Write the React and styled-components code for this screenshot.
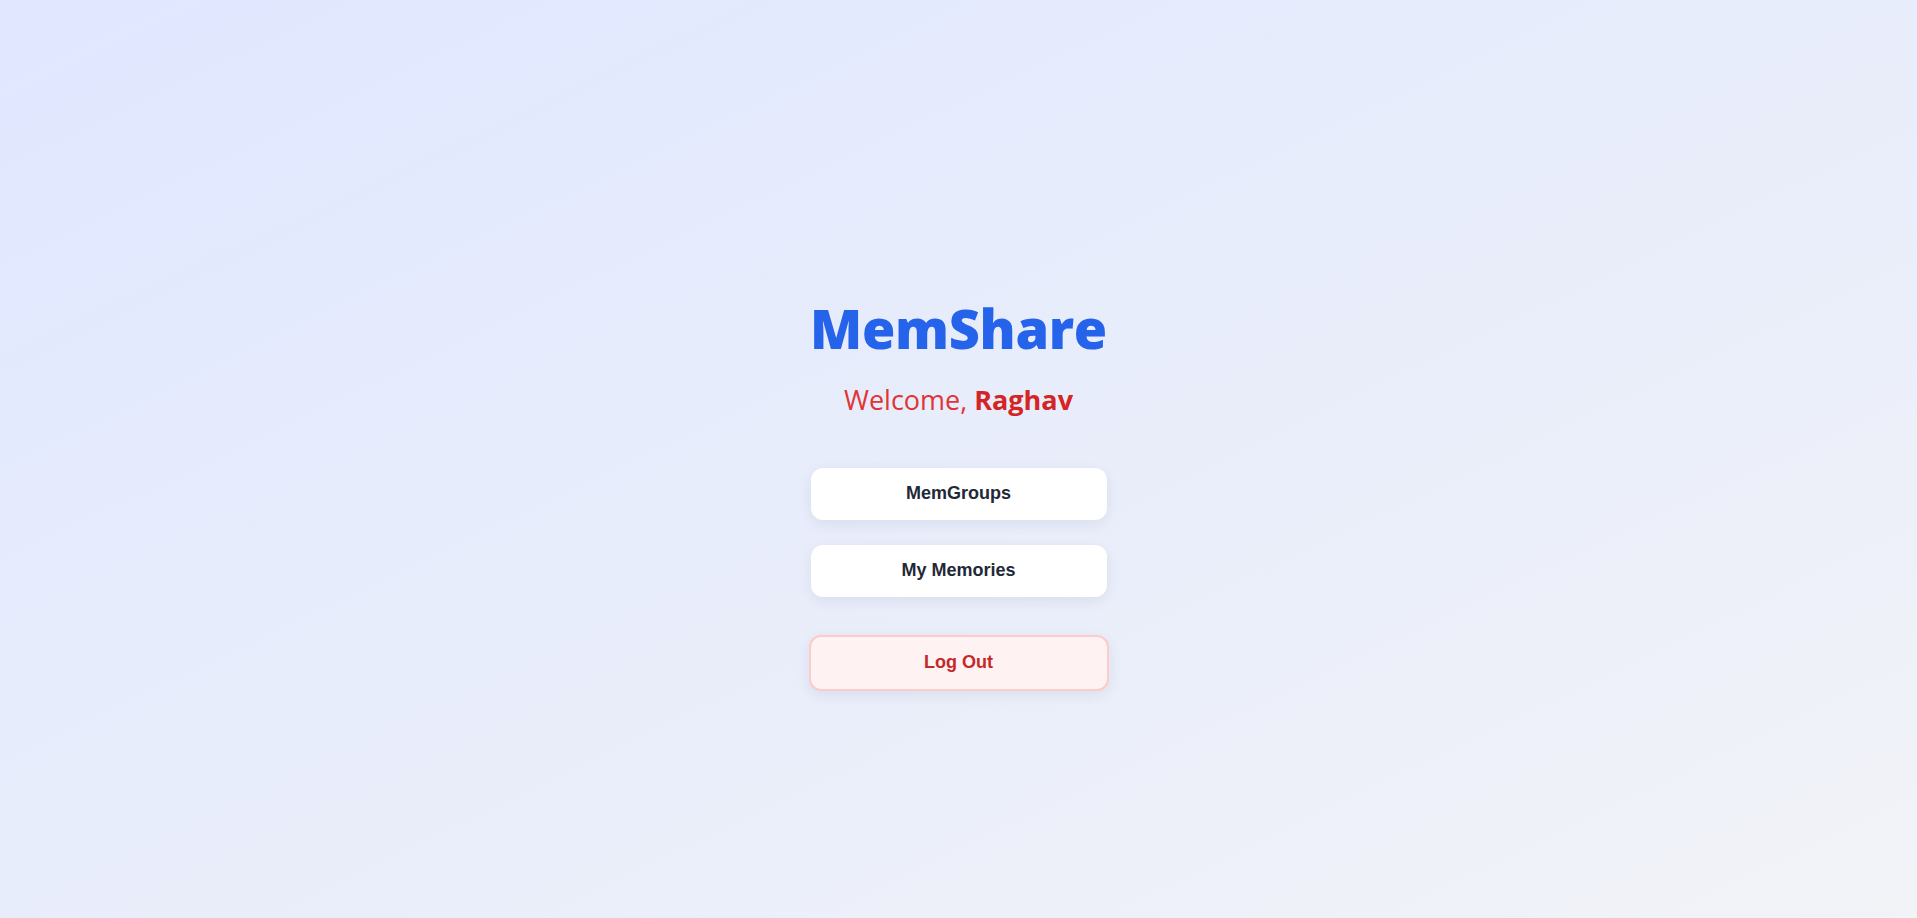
import styled, { createGlobalStyle } from 'styled-components';

const GlobalStyle = createGlobalStyle`
  html, body {
    margin: 0;
    padding: 0;
  }
  * {
    box-sizing: border-box;
  }
`;

const Page = styled.main`
  width: 100vw;
  min-height: 100vh;
  padding-top: 74px;
  display: flex;
  flex-direction: column;
  align-items: center;
  justify-content: center;
  background: linear-gradient(to bottom right, #e0e7ff, #f1f3f7);
`;

const Title = styled.h1`
  margin: 0;
  font-family: "Open Sans", "Noto Sans", sans-serif;
  font-size: 54px;
  font-weight: 800;
  line-height: 1;
  letter-spacing: -0.3px;
  color: #2563eb;
`;

const Welcome = styled.p`
  margin: 29px 0 0;
  font-family: "Open Sans", "Noto Sans", sans-serif;
  font-size: 27px;
  line-height: 1.2;
  color: #e03535;

  strong {
    font-weight: 700;
    color: #d42424;
  }
`;

const Menu = styled.nav`
  margin-top: 51px;
  width: 300px;
  display: flex;
  flex-direction: column;
  align-items: center;
  gap: 25px;
`;

const Button = styled.button`
  width: ${(p) => (p.$danger ? '300px' : '296px')};
  height: ${(p) => (p.$danger ? '56px' : '52px')};
  margin-top: ${(p) => (p.$danger ? '13px' : '0')};
  border-radius: 12px;
  border: ${(p) => (p.$danger ? '2px solid #fecaca' : 'none')};
  background: ${(p) => (p.$danger ? '#fef2f2' : '#ffffff')};
  color: ${(p) => (p.$danger ? '#c62828' : '#1f2937')};
  font-family: "Liberation Sans", Arial, sans-serif;
  font-size: 18px;
  font-weight: 700;
  cursor: pointer;
  box-shadow: 0 4px 14px rgba(30, 41, 80, 0.08);
`;

export default function App() {
  return (
    <>
      <GlobalStyle />
      <Page>
        <Title>MemShare</Title>
        <Welcome>
          Welcome, <strong>Raghav</strong>
        </Welcome>
        <Menu>
          <Button>MemGroups</Button>
          <Button>My Memories</Button>
          <Button $danger>Log Out</Button>
        </Menu>
      </Page>
    </>
  );
}
